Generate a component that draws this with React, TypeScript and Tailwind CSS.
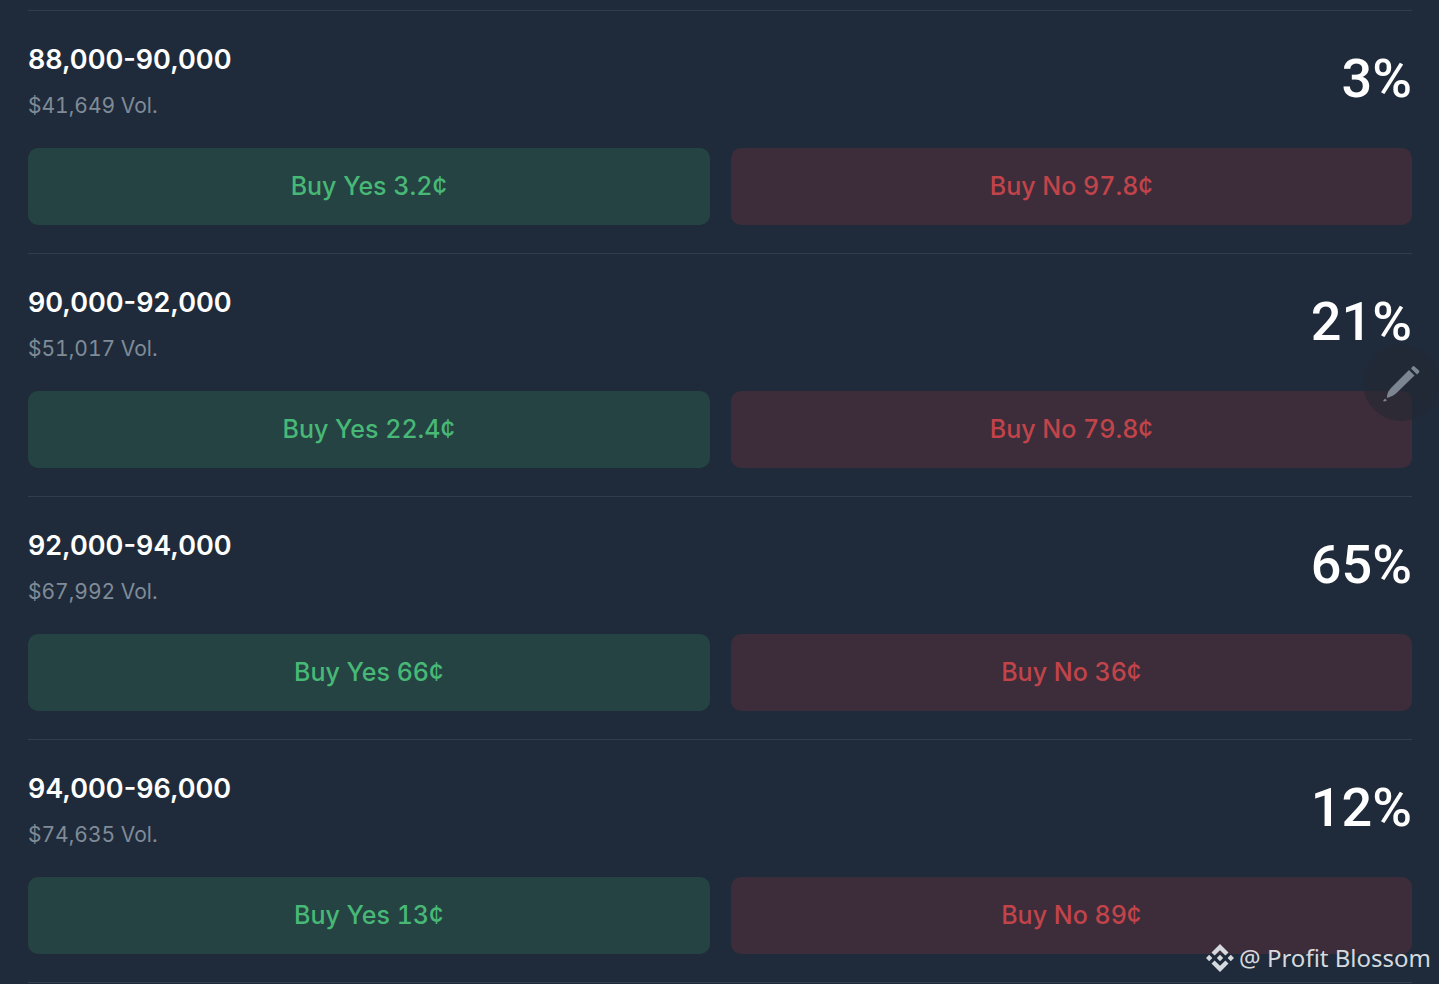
const markets = [
  { range: '88,000-90,000', volume: '$41,649', chance: '3%', yes: '3.2¢', no: '97.8¢' },
  { range: '90,000-92,000', volume: '$51,017', chance: '21%', yes: '22.4¢', no: '79.8¢' },
  { range: '92,000-94,000', volume: '$67,992', chance: '65%', yes: '66¢', no: '36¢' },
  { range: '94,000-96,000', volume: '$74,635', chance: '12%', yes: '13¢', no: '89¢' },
];

type Market = (typeof markets)[number];

function MarketRow({ market }: { market: Market }) {
  return (
    <li className="border-b border-[#2f3d4d] pb-7">
      <div className="flex h-[137px] items-start justify-between">
        <div className="pt-[31px]">
          <h2 className="text-[27px] leading-9 font-semibold text-white">{market.range}</h2>
          <p className="mt-3 text-[21px] leading-8 text-[#808b98] tabular-nums">{market.volume} Vol.</p>
        </div>
        <p className="pt-9 font-['Roboto',sans-serif] text-[54px] leading-16 font-medium text-white">
          {market.chance}
        </p>
      </div>
      <div className="grid grid-cols-2 gap-[21px] text-[25px] font-medium tabular-nums">
        <button className="h-[77px] rounded-[10px] bg-[#244342] text-[#48b877]">Buy Yes {market.yes}</button>
        <button className="h-[77px] rounded-[10px] bg-[#3d2d3a] text-[#c1444a]">Buy No {market.no}</button>
      </div>
    </li>
  );
}

function PencilIcon() {
  return (
    <svg width="38" height="38" viewBox="0 0 38 38" fill="#7c8592" aria-hidden="true">
      <path d="M27 6 32.500 11.500 14 29.500Q10 33 5 34Q4.500 29 9 24Z" />
      <path d="M29 4.500 30.500 2.500Q31.500 1.500 32.500 2.500L37 6.500Q37.800 7.500 37 8.500L35 10.500Z" />
      <path d="M3 34.500 5 36.500 2.500 37.500 1 37Z" />
    </svg>
  );
}

function DiamondLogo() {
  return (
    <svg width="28" height="28" viewBox="0 0 28 28" fill="currentColor" aria-hidden="true">
      <path d="M14 0 22.500 8.500 19.400 11.600 14 6.200 8.600 11.600 5.500 8.500Z" />
      <path d="M14 28 22.500 19.500 19.400 16.400 14 21.800 8.600 16.400 5.500 19.500Z" />
      <path d="M14 10.800 17.200 14 14 17.200 10.800 14Z" />
      <path d="M3.200 10.800 6.400 14 3.200 17.200 0 14Z" />
      <path d="M24.800 10.800 28 14 24.800 17.200 21.600 14Z" />
    </svg>
  );
}

export default function App() {
  return (
    <main className="relative min-h-screen overflow-hidden bg-[#1f2b3a] pt-[10px] pr-[27px] pl-7 font-['Inter',sans-serif]">
      <ul className="border-t border-[#2f3d4d]">
        {markets.map((m) => (
          <MarketRow key={m.range} market={m} />
        ))}
      </ul>

      <button
        aria-label="Edit"
        className="absolute top-[345px] right-0 flex size-[76px] items-center justify-center rounded-full bg-[#232833]/60"
      >
        <PencilIcon />
      </button>

      <div className="absolute right-2 bottom-2 flex items-center gap-[5px] font-['Noto_Sans',sans-serif] text-2xl leading-9 text-[#d6d9de]">
        <DiamondLogo />
        <span>@ Profit Blossom</span>
      </div>
    </main>
  );
}
